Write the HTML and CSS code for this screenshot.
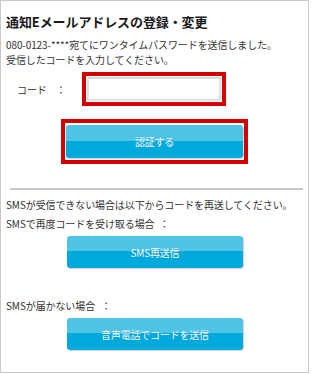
FILE: index.html
```html
<!DOCTYPE html>
<html lang="ja">
<head>
<meta charset="utf-8">
<link rel="stylesheet" href="styles.css">
</head>
<body>
<div class="panel">
  <h1 class="title">通知Eメールアドレスの登録・変更</h1>
  <p class="lead">080-0123-****宛てにワンタイムパスワードを送信しました。<br>受信したコードを入力してください。</p>
  <div class="code-row">
    <span class="code-label">コード</span><span class="code-colon">：</span>
    <div class="red-box input-box"><input class="code-input" type="text"></div>
  </div>
  <div class="center">
    <div class="red-box btn-box"><button class="btn btn-auth">認証する</button></div>
  </div>
  <hr class="sep">
  <p class="line">SMSが受信できない場合は以下からコードを再送してください。</p>
  <p class="line">SMSで再度コードを受け取る場合<span class="colon1">：</span></p>
  <div class="center"><button class="btn btn-plain">SMS再送信</button></div>
  <p class="line line-gap">SMSが届かない場合<span class="colon2">：</span></p>
  <div class="center"><button class="btn btn-plain">音声電話でコードを送信</button></div>
</div>
</body>
</html>
```
FILE: styles.css
```css
html, body {
  margin: 0;
  padding: 0;
  background: #ffffff;
}
body {
  font-family: "Noto Sans CJK JP", "Noto Sans", sans-serif;
  color: #333333;
  font-size: 10px;
  letter-spacing: -0.1px;
}
.panel {
  box-sizing: border-box;
  width: 309px;
  height: 373px;
  border: 1px solid #c9c9c9;
  padding: 11px 0 0 5px;
}
.title {
  margin: 0;
  font-size: 13px;
  line-height: 20px;
  font-weight: bold;
  color: #1a1a1a;
  letter-spacing: -0.1px;
}
.lead {
  margin: 5px 0 0 0;
  line-height: 15px;
}
.code-row {
  display: flex;
  align-items: center;
  margin-top: 5px;
}
.code-label {
  display: inline-block;
  width: 38px;
  padding-left: 11px;
}
.code-colon {
  display: inline-block;
  width: 26px;
  margin-left: 1px;
}
.red-box {
  box-sizing: border-box;
  border: 4px solid #d30000;
  background: #ffffff;
}
.input-box {
  width: 144px;
  height: 34px;
  padding: 1px;
}
.code-input {
  box-sizing: border-box;
  display: block;
  width: 134px;
  height: 24px;
  margin: 0;
  border: 2px solid #e0e0e0;
  border-top-color: #d8d8d8;
  background: #ffffff;
  outline: none;
}
.center {
  display: flex;
  justify-content: center;
  padding-right: 5px;
}
.btn-box {
  margin-top: 13px;
  width: 187px;
  height: 45px;
  padding: 2px 1px;
}
.btn {
  display: block;
  border: none;
  border-radius: 3px;
  background: linear-gradient(to bottom, #50c4e7 0%, #50c4e7 48%, #00a9dc 48%, #00a9dc 100%);
  color: #ffffff;
  font-family: "Noto Sans CJK JP", "Noto Sans", sans-serif;
  font-size: 10px;
  letter-spacing: -0.2px;
  box-shadow: 1px 1px 1px rgba(0, 0, 0, 0.18);
  padding: 0;
  text-shadow: 0 0 1px rgba(0, 80, 120, 0.3);
}
.btn-auth {
  width: 177px;
  height: 33px;
}
.btn-plain {
  width: 176px;
  height: 32px;
  margin-top: 3px;
  margin-left: 1px;
}
.sep {
  margin: 24px 5px 5px 4px;
  border: none;
  height: 2px;
  background: #c6c6c6;
}
.line {
  margin: 0;
  line-height: 19px;
}
.line-gap {
  margin-top: 28px;
}
.colon1 {
  margin-left: 5px;
}
.colon2 {
  margin-left: 6px;
}
```
